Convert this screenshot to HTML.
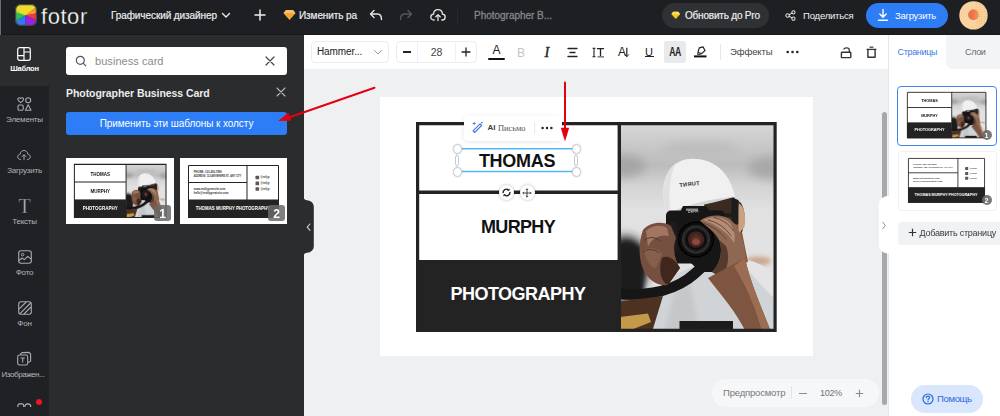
<!DOCTYPE html>
<html><head><meta charset="utf-8">
<style>
*{box-sizing:border-box;margin:0;padding:0}
html,body{width:1000px;height:416px;overflow:hidden;background:#eff0f2;font-family:"Liberation Sans","DejaVu Sans",sans-serif}
.a{position:absolute}
svg{position:absolute;overflow:visible}
#top{left:0;top:0;width:1000px;height:35px;background:#1e1f22;border-bottom:1px solid #18191b}
#side{left:0;top:35px;width:49px;height:381px;background:#202124}
#side .act{left:0;top:0;width:49px;height:51px;background:#2a2c2e}
#panel{left:49px;top:35px;width:255px;height:381px;background:#2a2c2e}
#tool{left:304px;top:35px;width:584px;height:34px;background:#fff}
#right{left:888px;top:35px;width:112px;height:381px;background:#fff;border-left:1px solid #e6e7ea}
.t{position:absolute;white-space:nowrap;line-height:1;transform:translateY(-50%)}
.hd{width:9.5px;height:9.5px;border-radius:50%;background:#fff;border:1px solid #c9cacc;box-shadow:0 0 2px rgba(0,0,0,.15)}
.hp{width:4.6px;height:11px;border-radius:2.3px;background:#fff;border:1px solid #c9cacc}
.rb{width:15px;height:15px;border-radius:50%;background:#fff;box-shadow:0 0 3px rgba(0,0,0,.3)}
.sl{position:absolute;left:0;width:49px;text-align:center;color:#b4b5b8;font-size:8px;letter-spacing:-0.2px;line-height:1;transform:translateY(-50%);white-space:nowrap}
</style></head><body>

<!-- ======= TOP BAR ======= -->
<div class="a" id="top"></div>
<div class="a" style="left:0;top:0;width:1px;height:416px;background:#6c6d70"></div>
<svg style="left:15px;top:4px" width="22" height="22" viewBox="0 0 22 22">
  <defs><clipPath id="lg"><rect x="0.5" y="0.5" width="21" height="21" rx="5"/></clipPath></defs>
  <g clip-path="url(#lg)">
    <polygon points="10.500,11.500 -6,6 -6,-6 28,-6 28,-2" fill="#efdc2a"/>
    <polygon points="10.500,11.500 28,-2 28,8" fill="#f99b3c"/>
    <polygon points="10.500,11.500 28,8 28,19" fill="#f43643"/>
    <polygon points="10.500,11.500 28,19 28,28 10.500,28" fill="#9a20e2"/>
    <polygon points="10.500,11.500 10.500,28 -6,28 -6,20" fill="#2f7af0"/>
    <polygon points="10.500,11.500 -6,20 -6,6" fill="#2ebf5c"/>
    <polygon points="10.500,11.500 -6,6 -6,1" fill="#b9d92c"/>
  </g>
  <rect x="0.600" y="0.600" width="20.800" height="20.800" rx="5" fill="none" stroke="#46474b" stroke-width="1.200"/>
</svg>
<div class="t" style="left:41px;top:17px;color:#fff;font-size:22px;letter-spacing:0.55px;-webkit-text-stroke:0.3px #1e1f22">fotor</div>
<div class="t" style="left:111px;top:15.5px;color:#ececec;font-size:10px;-webkit-text-stroke:0.2px #ececec;letter-spacing:-0.085px">Графический дизайнер</div>
<svg style="left:221px;top:12px" width="10" height="7" viewBox="0 0 10 7"><path d="M1.5 1.5 L5 5 L8.5 1.5" fill="none" stroke="#e8e8e8" stroke-width="1.4" stroke-linecap="round" stroke-linejoin="round"/></svg>
<svg style="left:254px;top:9px" width="12" height="12" viewBox="0 0 12 12"><path d="M6 1V11M1 6H11" stroke="#eee" stroke-width="1.5" stroke-linecap="round"/></svg>
<svg style="left:283px;top:9px" width="13" height="12" viewBox="0 0 13 12"><path d="M3 1H10L12.5 4.3L6.5 11L0.5 4.3Z" fill="#f2a33a"/><path d="M3 1H10L12.5 4.3H0.5Z" fill="#f8c266"/></svg>
<div class="t" style="left:299px;top:15.5px;color:#ececec;font-size:10px;-webkit-text-stroke:0.2px #ececec;letter-spacing:-0.09px">Изменить ра</div>
<svg style="left:369px;top:9px" width="14" height="12" viewBox="0 0 14 12"><path d="M5 1.5L1.5 5L5 8.5M1.8 5H8.5C11 5 12.5 7 12.5 10.5" fill="none" stroke="#e4e4e4" stroke-width="1.4" stroke-linecap="round" stroke-linejoin="round"/></svg>
<svg style="left:399px;top:9px" width="14" height="12" viewBox="0 0 14 12"><path d="M9 1.5L12.5 5L9 8.5M12.2 5H5.5C3 5 1.5 7 1.5 10.5" fill="none" stroke="#56575b" stroke-width="1.4" stroke-linecap="round" stroke-linejoin="round"/></svg>
<svg style="left:430px;top:8px" width="16" height="14" viewBox="0 0 16 14"><path d="M4.2 12H3.8C2 12 0.8 10.6 0.8 9C0.8 7.4 2 6.2 3.5 6.1C3.7 3.6 5.6 1.7 8 1.7C10.4 1.7 12.3 3.6 12.5 6.1C14 6.2 15.2 7.4 15.2 9C15.2 10.6 14 12 12.2 12H11.8" fill="none" stroke="#e4e4e4" stroke-width="1.3" stroke-linecap="round"/><path d="M8 12.5V6.8M5.8 8.8L8 6.6L10.2 8.8" fill="none" stroke="#e4e4e4" stroke-width="1.3" stroke-linecap="round" stroke-linejoin="round"/></svg>
<div class="a" style="left:457px;top:9px;width:1px;height:15px;background:#28292d"></div>
<div class="t" style="left:474px;top:15.5px;color:#85868a;font-size:10px;-webkit-text-stroke:0.3px #85868a;letter-spacing:-0.02px">Photographer B...</div>
<div class="a" style="left:662px;top:3px;width:107px;height:25px;border-radius:13px;background:#303135"></div>
<svg style="left:671px;top:11px" width="9.500" height="8.800" viewBox="0 0 13 12"><path d="M3 1H10L12.5 4.3L6.5 11L0.5 4.3Z" fill="#f5c526"/><path d="M3 1H10L12.5 4.3H0.5Z" fill="#fbe05e"/></svg>
<div class="t" style="left:685px;top:15.5px;color:#ececec;font-size:10px;-webkit-text-stroke:0.2px #ececec;letter-spacing:-0.2px">Обновить до Pro</div>
<svg style="left:784.500px;top:10px" width="11" height="11" viewBox="0 0 13 13"><circle cx="3" cy="6.5" r="2" fill="none" stroke="#e4e4e4" stroke-width="1.2"/><circle cx="10" cy="2.8" r="1.9" fill="none" stroke="#e4e4e4" stroke-width="1.2"/><circle cx="10" cy="10.2" r="1.9" fill="none" stroke="#e4e4e4" stroke-width="1.2"/><path d="M4.8 5.6L8.3 3.7M4.8 7.4L8.3 9.3" stroke="#e4e4e4" stroke-width="1.2"/></svg>
<div class="t" style="left:803px;top:15.5px;color:#f2f2f2;font-size:9.5px;letter-spacing:-0.19px">Поделиться</div>
<div class="a" style="left:866px;top:3px;width:82px;height:25px;border-radius:13px;background:#2d7df6"></div>
<svg style="left:877px;top:8px" width="12" height="14" viewBox="0 0 12 14"><path d="M6 1.5V9M2.8 6L6 9.2L9.2 6M1.5 12.2H10.5" fill="none" stroke="#fff" stroke-width="1.4" stroke-linecap="round" stroke-linejoin="round"/></svg>
<div class="t" style="left:895px;top:15.5px;color:#fff;font-size:9.5px;letter-spacing:-0.27px">Загрузить</div>
<svg style="left:959px;top:1px" width="29" height="29" viewBox="0 0 29 29"><defs><pattern id="dots" width="2.400" height="2.400" patternUnits="userSpaceOnUse"><circle cx="1.200" cy="1.200" r="0.550" fill="#f0b06e"/></pattern><clipPath id="avc"><circle cx="14.500" cy="14.400" r="14.200"/></clipPath><linearGradient id="avg" x1="0" y1="0" x2="1" y2="0"><stop offset="0" stop-color="#f0664a"/><stop offset="0.550" stop-color="#f07a4c"/><stop offset="1" stop-color="#f0a04e"/></linearGradient></defs><circle cx="14.500" cy="14.400" r="14.200" fill="#f8d3a0"/><rect x="16" y="0" width="14" height="29" fill="url(#dots)" clip-path="url(#avc)"/><circle cx="14.500" cy="13.700" r="5.400" fill="url(#avg)"/></svg>

<!-- ======= SIDEBAR ======= -->
<div class="a" id="side"><div class="a act"></div></div>
<!-- Шаблон -->
<svg style="left:17px;top:47px" width="14" height="14" viewBox="0 0 14 14"><rect x="0.7" y="0.7" width="12.6" height="12.6" rx="2" fill="none" stroke="#fff" stroke-width="1.2"/><path d="M7 0.7V13.3M0.7 8.6H7M7 5H13.3" stroke="#fff" stroke-width="1.2"/></svg>
<div class="sl" style="top:69px;color:#fff;font-weight:bold;font-size:7.5px;letter-spacing:-0.25px">Шаблон</div>
<!-- Элементы -->
<svg style="left:17px;top:97px" width="15" height="14" viewBox="0 0 15 14"><path d="M3.7 5.6C2 4.4 0.8 3.4 0.8 2.2C0.8 1.3 1.5 0.7 2.3 0.7C2.9 0.7 3.4 1 3.7 1.5C4 1 4.5 0.7 5.1 0.7C5.9 0.7 6.6 1.3 6.6 2.2C6.6 3.4 5.4 4.4 3.7 5.6Z" fill="none" stroke="#a9aaad" stroke-width="1.1" stroke-linejoin="round"/><circle cx="11.2" cy="3.2" r="2.5" fill="none" stroke="#a9aaad" stroke-width="1.1"/><rect x="1" y="8" width="5.2" height="5.2" rx="1.2" fill="none" stroke="#a9aaad" stroke-width="1.1"/><path d="M11.2 7.8L14 13.2H8.4Z" fill="none" stroke="#a9aaad" stroke-width="1.1" stroke-linejoin="round"/></svg>
<div class="sl" style="top:120px">Элементы</div>
<!-- Загрузить -->
<svg style="left:16.500px;top:148.800px" width="14" height="12.200" viewBox="0 0 16 14"><path d="M4.2 12H3.8C2 12 0.8 10.6 0.8 9C0.8 7.4 2 6.2 3.5 6.1C3.7 3.6 5.6 1.7 8 1.7C10.4 1.7 12.3 3.6 12.5 6.1C14 6.2 15.2 7.4 15.2 9C15.2 10.6 14 12 12.2 12H11.8" fill="none" stroke="#a9aaad" stroke-width="1.1" stroke-linecap="round"/><path d="M8 12.5V6.8M5.8 8.8L8 6.6L10.2 8.8" fill="none" stroke="#a9aaad" stroke-width="1.1" stroke-linecap="round" stroke-linejoin="round"/></svg>
<div class="sl" style="top:171px">Загрузить</div>
<!-- Тексты -->
<div class="a" style="left:0;top:196px;width:50px;text-align:center;font-family:'Liberation Serif',serif;font-size:20px;line-height:1;color:#b4b5b8;-webkit-text-stroke:0.35px #202124;left:-0.5px">T</div>
<div class="sl" style="top:221.5px">Тексты</div>
<!-- Фото -->
<svg style="left:18px;top:250px" width="14" height="14" viewBox="0 0 14 14"><rect x="0.7" y="0.7" width="12.6" height="12.6" rx="2.2" fill="none" stroke="#a9aaad" stroke-width="1.1"/><circle cx="4.6" cy="4.6" r="1.3" fill="none" stroke="#a9aaad" stroke-width="1"/><path d="M0.9 10.5L4 8L6.3 9.6L9.8 6.4L13.1 9.2" fill="none" stroke="#a9aaad" stroke-width="1.1" stroke-linejoin="round"/></svg>
<div class="sl" style="top:272.5px">Фото</div>
<!-- Фон -->
<svg style="left:18px;top:301px" width="14" height="14" viewBox="0 0 14 14"><rect x="0.7" y="0.7" width="12.6" height="12.6" rx="2.2" fill="none" stroke="#a9aaad" stroke-width="1.1"/><path d="M1 8.2L8.2 1M2 12.6L12.6 2M6 13L13 6" stroke="#a9aaad" stroke-width="1.1"/></svg>
<div class="sl" style="top:323.5px">Фон</div>
<!-- Изображения -->
<svg style="left:17px;top:351px" width="15" height="15" viewBox="0 0 15 15"><rect x="0.7" y="4" width="10" height="10" rx="1.8" fill="none" stroke="#a9aaad" stroke-width="1.1"/><path d="M3 3.6L5 1.6L12 1.4L13.6 3V10L11.2 11.6" fill="none" stroke="#a9aaad" stroke-width="1.1" stroke-linejoin="round"/><path d="M3.6 7H7.8M5.7 7V11.4" stroke="#a9aaad" stroke-width="1.1"/></svg>
<div class="sl" style="top:374.5px;letter-spacing:-0.43px;left:-1.5px">Изображен...</div>
<!-- last -->
<svg style="left:16.500px;top:402.500px;overflow:hidden" width="15" height="4.500" viewBox="0 0 15 4.500"><rect x="0.900" y="0.900" width="5.800" height="8" rx="1.600" fill="none" stroke="#b4b5b8" stroke-width="1.100"/><circle cx="10.800" cy="3.900" r="3" fill="none" stroke="#b4b5b8" stroke-width="1.100"/></svg>
<div class="a" style="left:36.400px;top:398.600px;width:6px;height:6px;border-radius:50%;background:#f0141e"></div>

<!-- ======= LEFT PANEL ======= -->
<div class="a" id="panel"></div>
<div class="a" style="left:66px;top:47px;width:221px;height:28px;border-radius:3px;background:#fff"></div>
<svg style="left:75px;top:55px" width="12" height="12" viewBox="0 0 12 12"><circle cx="5.3" cy="5.3" r="4" fill="none" stroke="#555" stroke-width="1.2"/><path d="M8.3 8.3L10.8 10.8" stroke="#555" stroke-width="1.2" stroke-linecap="round"/></svg>
<div class="t" style="left:95px;top:60.5px;color:#8b8b8b;font-size:11px;letter-spacing:0.05px">business card</div>
<svg style="left:265px;top:56px" width="10" height="10" viewBox="0 0 10 10"><path d="M1 1L9 9M9 1L1 9" stroke="#444" stroke-width="1.2" stroke-linecap="round"/></svg>
<div class="t" style="left:66px;top:92.5px;color:#ececec;font-size:10.5px;font-weight:bold;letter-spacing:-0.065px">Photographer Business Card</div>
<svg style="left:276px;top:87px" width="10" height="10" viewBox="0 0 10 10"><path d="M1 1L9 9M9 1L1 9" stroke="#b4b5b8" stroke-width="1.1" stroke-linecap="round"/></svg>
<div class="a" style="left:66px;top:112px;width:221px;height:23px;border-radius:3px;background:#2d7df6"></div>
<div class="t" style="left:66px;width:221px;text-align:center;top:123.5px;color:#fff;font-size:10px;letter-spacing:-0.08px">Применить эти шаблоны к холсту</div>
<!-- thumb 1 -->
<div class="a" style="left:66px;top:158px;width:108px;height:66px;background:#fff"></div>
<svg style="left:74px;top:164px" width="92.4" height="54" viewBox="416 122 360 210.4">
  <rect x="416" y="122" width="360" height="210" fill="#fff"/>
  <use href="#photo"/>
  <rect x="416" y="260" width="203" height="72" fill="#232323"/>
  <path d="M417.5 123.5H774.5V330.5H417.5ZM416 192.5H619M619 122V332" fill="none" stroke="#232323" stroke-width="4"/>
  <text x="518" y="169.5" text-anchor="middle" font-family="Liberation Sans, sans-serif" font-weight="bold" font-size="17.5" fill="#111">THOMAS</text>
  <text x="518" y="235.5" text-anchor="middle" font-family="Liberation Sans, sans-serif" font-weight="bold" font-size="17.5" fill="#111">MURPHY</text>
  <text x="518" y="301.5" text-anchor="middle" font-family="Liberation Sans, sans-serif" font-weight="bold" font-size="17.5" fill="#fff">PHOTOGRAPHY</text>
</svg>
<div class="a" style="left:154px;top:205px;width:17px;height:16px;border-radius:3px;background:rgba(105,105,105,.85)"></div>
<div class="t" style="left:154px;width:17px;text-align:center;top:213.8px;color:#fff;font-size:12px;font-weight:bold">1</div>
<!-- thumb 2 -->
<div class="a" style="left:180px;top:158px;width:107px;height:66px;background:#fff"></div>
<svg style="left:188px;top:164.5px" width="91" height="53" viewBox="0 0 91 53">
  <rect x="0" y="0" width="91" height="53" fill="#fff"/>
  <rect x="0" y="34.5" width="91" height="18.5" fill="#232323"/>
  <path d="M0.5 0.5H90.5V52.5H0.5ZM0 17.5H59M59 0V35" fill="none" stroke="#232323" stroke-width="1"/>
  <g font-family="Liberation Sans, sans-serif" font-size="2.9" fill="#333" font-weight="bold">
    <text x="5.8" y="8.4" textLength="28" lengthAdjust="spacingAndGlyphs">PHONE: 123-456-7890</text>
    <text x="5.8" y="11.9" textLength="47.5" lengthAdjust="spacingAndGlyphs">ADDRESS: 123 ANYWHERE ST., ANY CITY</text>
    <text x="5.8" y="25.3" textLength="31.6" lengthAdjust="spacingAndGlyphs">www.reallygreatsite.com</text>
    <text x="5.8" y="28.6" textLength="34.7" lengthAdjust="spacingAndGlyphs">hello@reallygreatsite.com</text>
    <text x="72.6" y="13.3" font-size="2.6" textLength="9" lengthAdjust="spacingAndGlyphs">@reallygr</text>
    <text x="72.6" y="19.3" font-size="2.6" textLength="9" lengthAdjust="spacingAndGlyphs">@reallygr</text>
    <text x="72.6" y="24.8" font-size="2.6" textLength="9" lengthAdjust="spacingAndGlyphs">@reallygr</text>
  </g>
  <rect x="67.5" y="10.7" width="3.6" height="3.6" rx="0.5" fill="#5a5a5a"/><rect x="67.5" y="16.6" width="3.6" height="3.6" rx="0.5" fill="#5a5a5a"/><rect x="67.5" y="22.2" width="3.6" height="3.6" rx="0.5" fill="#5a5a5a"/>
  <text x="7.8" y="45.4" font-family="Liberation Sans, sans-serif" font-weight="bold" font-size="5" fill="#fff" textLength="74.2" lengthAdjust="spacingAndGlyphs">THOMAS MURPHY PHOTOGRAPHY</text>
</svg>
<div class="a" style="left:268px;top:205px;width:17px;height:16px;border-radius:3px;background:rgba(105,105,105,.85)"></div>
<div class="t" style="left:268px;width:17px;text-align:center;top:213.8px;color:#fff;font-size:12px;font-weight:bold">2</div>
<!-- collapse handle -->
<svg style="left:303px;top:197px" width="12" height="59" viewBox="0 0 12 59"><path d="M0 0C1 2 2 3 4 3.200C8 3.500 10.800 6 10.800 10V49C10.800 53 8 55.500 4 55.800C2 56 1 57 0 59Z" fill="#2a2c2e"/><path d="M7 27L4.200 30.200L7 33.400" fill="none" stroke="#cfd0d2" stroke-width="1.100" stroke-linecap="round" stroke-linejoin="round"/></svg>

<!-- ======= TOOLBAR ======= -->
<div class="a" id="tool"></div>
<div class="a" style="left:311px;top:41px;width:78px;height:22px;border:1px solid #ececee;border-radius:4px"></div>
<div class="t" style="left:317px;top:52px;color:#222;font-size:10px;letter-spacing:-0.1px">Hammer...</div>
<svg style="left:373px;top:49px" width="10" height="7" viewBox="0 0 10 7"><path d="M1.5 1.5L5 5L8.5 1.5" fill="none" stroke="#999" stroke-width="1" stroke-linecap="round" stroke-linejoin="round"/></svg>
<div class="a" style="left:396px;top:41px;width:81px;height:22px;border:1px solid #ececee;border-radius:4px"></div>
<div class="a" style="left:417px;top:41px;width:1px;height:22px;background:#f0f0f2"></div>
<div class="a" style="left:455px;top:41px;width:1px;height:22px;background:#f0f0f2"></div>
<div class="a" style="left:402.5px;top:51px;width:8px;height:1.6px;background:#222"></div>
<div class="t" style="left:418px;width:37px;text-align:center;top:52px;color:#444;font-size:10.5px">28</div>
<svg style="left:461px;top:47px" width="10" height="10" viewBox="0 0 10 10"><path d="M5 1V9M1 5H9" stroke="#222" stroke-width="1.3" stroke-linecap="round"/></svg>
<!-- text color -->
<div class="t" style="left:488px;width:17px;text-align:center;top:50px;color:#222;font-size:12px">A</div>
<div class="a" style="left:488px;top:57.5px;width:17px;height:2.6px;border-radius:1px;background:#111"></div>
<div class="t" style="left:513px;width:16px;text-align:center;top:52.5px;color:#c4c4c6;font-size:12px">B</div>
<div class="t" style="left:539px;width:16px;text-align:center;top:52px;color:#222;font-size:14.5px;font-style:italic;font-family:'Liberation Serif',serif;-webkit-text-stroke:0.35px #222">I</div>
<svg style="left:567px;top:47px" width="11" height="11" viewBox="0 0 11 11"><path d="M1 1.5H10M3 5.5H8M1 9.5H10" stroke="#222" stroke-width="1.3" stroke-linecap="round"/></svg>
<svg style="left:592px;top:47px" width="13" height="11" viewBox="0 0 13 11"><path d="M0.5 1.300H3.500M0.500 9.700H3.500M2 1.300V9.700" stroke="#222" stroke-width="1.100"/><path d="M5 1.700H12M8.500 1.700V9" stroke="#222" stroke-width="1.300"/><path d="M5.500 9.900H12" stroke="#222" stroke-width="0.900"/></svg>
<div class="t" style="left:618px;top:52.300px;color:#222;font-size:12px">A</div>
<svg style="left:624px;top:47px" width="6" height="11" viewBox="0 0 6 11"><path d="M2.800 0.800V9.600" stroke="#222" stroke-width="1.200"/><path d="M0.800 7.400L2.800 9.800L4.800 7.400" fill="none" stroke="#222" stroke-width="0.900"/></svg>
<div class="t" style="left:641px;width:16px;text-align:center;top:51.800px;color:#222;font-size:11px">U</div>
<div class="a" style="left:644.500px;top:56.200px;width:9px;height:1.200px;background:#222"></div>
<div class="a" style="left:664px;top:41px;width:22px;height:22px;border-radius:2px;background:#e9eaec"></div>
<div class="t" style="left:664px;width:22px;text-align:center;top:52.300px;color:#222;font-size:12px;font-weight:bold;letter-spacing:-0.800px;transform:translateY(-50%) scaleX(.72)">AA</div>
<svg style="left:693px;top:45px" width="15" height="14" viewBox="0 0 15 14"><path d="M6.300 2.800L10 1.800L12 5.600L8.300 8.800L5 7.200Z" fill="none" stroke="#222" stroke-width="1.200" stroke-linejoin="round"/><path d="M5.200 7.400L4.400 9.300L6.800 9.500L8 8.700" fill="none" stroke="#222" stroke-width="1" stroke-linejoin="round"/><path d="M1 11.400H13.500" stroke="#111" stroke-width="2"/></svg>
<div class="a" style="left:720px;top:44px;width:1px;height:16px;background:#e6e7e9"></div>
<div class="t" style="left:730px;top:52px;color:#444;font-size:9.5px;letter-spacing:-0.1px">Эффекты</div>
<svg style="left:786px;top:50px" width="13" height="4" viewBox="0 0 13 4"><circle cx="1.7" cy="2" r="1.3" fill="#222"/><circle cx="6.5" cy="2" r="1.3" fill="#222"/><circle cx="11.3" cy="2" r="1.3" fill="#222"/></svg>
<svg style="left:840px;top:46px" width="13" height="13" viewBox="0 0 13 13"><rect x="1.400" y="6.300" width="9.400" height="5.300" rx="0.600" fill="none" stroke="#333" stroke-width="1.400"/><path d="M3.800 3.600C3.800 1.200 9.300 1.200 9.300 3.800V6.200" fill="none" stroke="#333" stroke-width="1.300"/></svg>
<svg style="left:866px;top:46px" width="11" height="13" viewBox="0 0 11 13"><path d="M0.600 3.400H10.400" stroke="#333" stroke-width="1.300"/><path d="M3.600 1.200H7.400" stroke="#333" stroke-width="1.200"/><path d="M1.900 3.600V11.300H9.100V3.600" fill="none" stroke="#333" stroke-width="1.400" stroke-linejoin="round"/></svg>

<!-- ======= CANVAS ======= -->
<svg width="0" height="0" style="left:0;top:0">
 <defs>
  <linearGradient id="bgG" x1="0" y1="0" x2="0" y2="1">
    <stop offset="0" stop-color="#d6d6d6"/><stop offset="0.1" stop-color="#c9c9c9"/><stop offset="0.2" stop-color="#bcbcbc"/><stop offset="0.3" stop-color="#d4d4d4"/><stop offset="0.42" stop-color="#e1e1e1"/><stop offset="1" stop-color="#e3e3e3"/>
  </linearGradient>
  <linearGradient id="capG" x1="0" y1="0" x2="0.3" y2="1">
    <stop offset="0" stop-color="#f3f3f3"/><stop offset="0.6" stop-color="#ebebeb"/><stop offset="1" stop-color="#cfcfcf"/>
  </linearGradient>
  <radialGradient id="lensG" cx="0.5" cy="0.5" r="0.5">
    <stop offset="0" stop-color="#6b3a30"/><stop offset="0.45" stop-color="#3a1f1c"/><stop offset="0.5" stop-color="#0c0c0c"/><stop offset="0.72" stop-color="#1c1c1c"/><stop offset="0.78" stop-color="#343434"/><stop offset="0.84" stop-color="#101010"/><stop offset="1" stop-color="#0c0c0c"/>
  </radialGradient>
  <filter id="b1" x="-20%" y="-20%" width="140%" height="140%"><feGaussianBlur stdDeviation="0.7"/></filter>
  <filter id="b4" x="-50%" y="-50%" width="200%" height="200%"><feGaussianBlur stdDeviation="5"/></filter>
  <filter id="b2" x="-50%" y="-50%" width="200%" height="200%"><feGaussianBlur stdDeviation="2.2"/></filter>
  <clipPath id="phc"><rect x="620" y="124" width="156" height="206"/></clipPath>
  <g id="photo" clip-path="url(#phc)">
    <rect x="620" y="124" width="156" height="206" fill="url(#bgG)"/>
    <ellipse cx="622" cy="166" rx="24" ry="11" fill="#a6a6a6" filter="url(#b4)"/>
    <ellipse cx="772" cy="168" rx="24" ry="11" fill="#a8a8a8" filter="url(#b4)"/>
    <ellipse cx="700" cy="150" rx="40" ry="8" fill="#bdbdbd" filter="url(#b4)"/>
    <ellipse cx="626" cy="266" rx="22" ry="30" fill="#222" filter="url(#b4)"/>
    <path d="M618 244C630 240 642 244 644 256V300H618Z" fill="#1c1c1c" filter="url(#b2)"/>
    <g filter="url(#b1)">
      <!-- neck / shoulder blur -->
      <ellipse cx="758" cy="261" rx="13" ry="4.500" fill="#c9a88e" filter="url(#b2)"/>
      <!-- shirt -->
      <path d="M650 332L660 286C676 272 700 262 722 258C742 254 760 262 776 277V332Z" fill="#d1d4d7"/>
      <path d="M742 262C752 258 766 266 776 277V300C766 290 752 276 742 262Z" fill="#e4e4e6"/>
      <path d="M664 332L674 292L690 282L700 332Z" fill="#c6c7c9" filter="url(#b2)"/>
      <path d="M679.500 332V321H733V332Z" fill="#1c1c1c"/>
      <!-- face -->
      <path d="M704 204L733 197L741 203C746.500 212 745.500 226 739 240L730 250L718 244L706 222Z" fill="#3a2a24"/><path d="M731 222L739 224C742 230 741 236 739 240L730 250L724 240Z" fill="#8d624a"/>
      <path d="M738.500 203C744 206 746.500 215 744.500 227L738.500 234Z" fill="#c9a184"/>
      <!-- neck -->
      <path d="M726 238L742 232L748 262L728 266Z" fill="#875a40"/>
      <!-- cap -->
      <path d="M663.500 194C662.500 172 675 158.800 692.500 158.800C713 158.800 729.500 171 735 196.500C723 199.500 704 203.500 692 206.500C682 209 672 213 667 215.500C664.500 208 663.800 201 663.500 194Z" fill="#f0f0f0"/>
      <path d="M667 215.500C674 208.500 704 199.500 735 196.500C723 200.500 704 204.500 692 207.500C682 210 672 213.500 667 215.500Z" fill="#d4d4d4"/>
      <path d="M663.800 194C663.300 180 668 169 676 163C670 174 668.500 190 670 211L667 215.500C664.500 208 664 201 663.800 194Z" fill="#e0e0e0"/>
      <!-- glasses -->
      <path d="M731.500 198L738.500 200L737.500 225L731.500 222Z" fill="#1b1b1b"/>
      <path d="M712 213.500L734 213.500L734 217L712 217Z" fill="#1b1b1b"/>
      <!-- camera -->
      <path d="M679 214L683 206H706L712 214Z" fill="#141414"/>
      <rect x="666" y="210.500" width="59" height="53" rx="5" fill="#141414"/>
      <path d="M690 262H722L716 272H700Z" fill="#141414"/>
      <circle cx="696" cy="239.500" r="17.300" fill="url(#lensG)"/>
      <circle cx="696" cy="239.500" r="17.300" fill="none" stroke="#050505" stroke-width="1.500"/>
      <ellipse cx="696" cy="242" rx="4" ry="3" fill="#8a4a3c"/>
      <rect x="686" y="208.500" width="12" height="2.200" fill="#8d8d8d"/>
      <text x="688" y="212.800" font-family="Liberation Sans, sans-serif" font-weight="bold" font-size="3.400" fill="#d8d8d8" transform="rotate(-4 688 212)">Canon</text>
      <circle cx="696" cy="239.500" r="12.200" fill="none" stroke="#2c2c2c" stroke-width="1.600"/>
      <path d="M668 222C672 220 676 222 677 226V250C676 254 672 256 668 254Z" fill="#1e1e1e"/>
      <!-- strap -->
      <path d="M612 293C640 297 668 293 688 279C696 273 702 268 706 262" fill="none" stroke="#161616" stroke-width="10.500"/>
      <!-- left hand -->
      <path d="M643 230C650 221.500 664 221 671 226L676 238C672 249 675 260 680 268L668 285C655 287 645 277 641 263C638.500 251 639.500 240 643 230Z" fill="#74503f"/>
      <path d="M646 231C652 225 662 224.500 667 228L669 236C660 234 652 238 648 247Z" fill="#a27660"/>
      <path d="M644 250C650 246 658 248 662 254L656 268C650 268 646 260 644 250Z" fill="#875f4e"/>
      <path d="M662 258C668 254 676 260 680 268L668 285C661 282 658 270 662 258Z" fill="#40261a"/>
      <path d="M645 240C650 236 656 237 660 241M643 252C648 248 655 249 659 253" fill="none" stroke="#4e3428" stroke-width="0.900" stroke-linecap="round"/>
      <!-- right hand -->
      <path d="M700 220.500C710 213.500 726 214 733 222C741 232 746 246 745 259C744 269 739 277 731 283L712 272C721 263 723 250 719 240C715 232 707 227 700 220.500Z" fill="#8e6753"/>
      <path d="M703 220C712 215.500 724 216.500 730 223C734 229 736 236 734 243C729 234 719 226 703 220Z" fill="#b58c75"/>
      <path d="M712 272C721 263 723 250 719 240L726 246C730 256 728 268 722 278Z" fill="#553a2e"/>
      <path d="M704 223.500C712 226 720 231 726 239M708 220C717 222 726 228 731 236M714 217.500C722 219 729 224 733.500 231" fill="none" stroke="#5e4032" stroke-width="0.900" stroke-linecap="round"/>
      <!-- right forearm -->
      <path d="M708 278L745 258C750 282 762 308 771 332L746 332C736 312 722 296 708 278Z" fill="#7d5440"/>
      <path d="M734 266L745 258C750 282 762 308 771 332L762 332C756 308 746 286 734 266Z" fill="#9c6d53"/>
      <!-- left forearm + bracelet -->
      <path d="M616 302L663 296L652 332H616Z" fill="#4e3123"/>
      <path d="M620 317L648 313.500L651 322L626 332H620Z" fill="#c39a4a"/>
    </g>
  </g>
 </defs>
</svg>
<!-- white page -->
<div class="a" style="left:380px;top:97px;width:433px;height:259px;background:#fff"></div>
<svg style="left:416px;top:122px" width="361" height="210.4" viewBox="416 122 361 210.4">
  <rect x="416" y="122" width="360.500" height="210" fill="#fff"/>
  <use href="#photo"/>
  <g transform="translate(689.5 186) rotate(-6) scale(-1 1)"><text x="0" y="0" text-anchor="middle" font-family="Liberation Sans, sans-serif" font-weight="bold" font-size="5.6" fill="#2a2a2a" letter-spacing="0.3">TURNT</text></g>
  <rect x="416" y="260" width="203.5" height="72" fill="#232323"/>
  <path d="M417.600 123.600H775.100V330.300H417.600Z" fill="none" stroke="#232323" stroke-width="3.200"/>
  <path d="M416 192.3H619M619.3 122V332" fill="none" stroke="#232323" stroke-width="3.4"/>
</svg>
<div class="t" style="left:416px;width:202px;text-align:center;top:161.2px;color:#111;font-size:18px;font-weight:bold;letter-spacing:-0.3px">THOMAS</div>
<div class="t" style="left:417px;width:202px;text-align:center;top:227.4px;color:#111;font-size:18px;font-weight:bold;letter-spacing:-0.65px">MURPHY</div>
<div class="t" style="left:417px;width:202px;text-align:center;top:294.1px;color:#fff;font-size:18px;font-weight:bold;letter-spacing:-0.5px">PHOTOGRAPHY</div>
<!-- selection -->
<svg style="left:450px;top:140px" width="140" height="40" viewBox="450 140 140 40"><path d="M457 148.700H576M457 171.400H576" stroke="#55b7f1" stroke-width="1.500"/><path d="M457 148V172M576 148V172" stroke="#bfe3f8" stroke-width="1"/></svg>
<div class="a hd" style="left:452.5px;top:144px"></div><div class="a hd" style="left:571.5px;top:144px"></div>
<div class="a hd" style="left:452.5px;top:167px"></div><div class="a hd" style="left:571.5px;top:167px"></div>
<div class="a hp" style="left:454.7px;top:154.5px"></div><div class="a hp" style="left:573.7px;top:154.5px"></div>
<!-- rotate / move -->
<div class="a rb" style="left:498.5px;top:185px"></div><div class="a rb" style="left:519.5px;top:185px"></div>
<svg style="left:501.5px;top:188px" width="9" height="9" viewBox="0 0 9 9"><path d="M1.2 5.2A3.3 3.3 0 0 1 6.8 2.2M7.8 3.8A3.3 3.3 0 0 1 2.2 6.8" fill="none" stroke="#222" stroke-width="1.4"/><path d="M7.4 0.8L7 2.6L5.3 2.2M1.6 8.2L2 6.4L3.7 6.8" fill="none" stroke="#333" stroke-width="0.9"/></svg>
<svg style="left:522px;top:187.5px" width="10" height="10" viewBox="0 0 10 10"><path d="M5 0.8V9.2M0.8 5H9.2" stroke="#333" stroke-width="0.9"/><path d="M3.8 2L5 0.8L6.2 2M3.8 8L5 9.2L6.2 8M2 3.8L0.8 5L2 6.2M8 3.8L9.2 5L8 6.2" fill="none" stroke="#333" stroke-width="0.8"/></svg>
<!-- popup -->
<div class="a" style="left:464px;top:115.5px;width:98px;height:25px;border-radius:4px;background:#fff;box-shadow:0 1px 5px rgba(0,0,0,.10)"></div>
<svg style="left:471px;top:121px" width="13" height="13" viewBox="0 0 13 13"><path d="M2 11.2L9 4.2L10.6 5.8L3.6 12.8Z" transform="translate(0 -1.3)" fill="none" stroke="#4677e0" stroke-width="1.1" stroke-linejoin="round"/><path d="M3.2 1V4M1.7 2.5H4.7" stroke="#4677e0" stroke-width="0.9"/><path d="M10.8 0.8V2.6M9.9 1.7H11.7" stroke="#4677e0" stroke-width="0.8"/></svg>
<div class="t" style="left:487.5px;top:128px;color:#3c3c3c;font-size:8px;font-weight:bold">AI</div>
<div class="t" style="left:498px;top:128px;color:#555;font-size:8.5px;font-family:'Liberation Serif',serif;letter-spacing:-0.1px">Письмо</div>
<div class="a" style="left:533.5px;top:122px;width:1px;height:12px;background:#e8e8ea"></div>
<svg style="left:541px;top:126.3px" width="12" height="4" viewBox="0 0 12 4"><circle cx="1.6" cy="2" r="1.2" fill="#222"/><circle cx="6" cy="2" r="1.2" fill="#222"/><circle cx="10.4" cy="2" r="1.2" fill="#222"/></svg>
<!-- scrollbar -->
<div class="a" style="left:882px;top:112px;width:5px;height:292.5px;border-radius:2.5px;background:#a7a8aa"></div>
<!-- zoom pill -->
<div class="a" style="left:712px;top:379px;width:167px;height:27.5px;border-radius:14px;background:#f6f7f8"></div>
<div class="t" style="left:723px;top:392.5px;color:#77787b;font-size:9.5px;letter-spacing:-0.18px">Предпросмотр</div>
<div class="a" style="left:791px;top:386px;width:1px;height:13px;background:#e3e4e6"></div>
<div class="a" style="left:799px;top:392.6px;width:8px;height:1.2px;background:#8a8b8e"></div>
<div class="t" style="left:820px;top:392.5px;color:#707174;font-size:9px;letter-spacing:-0.25px">102%</div>
<svg style="left:855px;top:388.5px" width="9" height="9" viewBox="0 0 9 9"><path d="M4.5 0.8V8.2M0.8 4.5H8.2" stroke="#8a8b8e" stroke-width="1.1"/></svg>

<!-- ======= RIGHT PANEL ======= -->
<div class="a" id="right"></div>
<div class="a" style="left:946px;top:35px;width:54px;height:34px;background:#f3f4f6;border-bottom-left-radius:7px"></div>
<div class="t" style="left:897.5px;top:52px;color:#3a7be6;font-size:9px;letter-spacing:-0.32px">Страницы</div>
<div class="t" style="left:965px;top:52px;color:#6a6b6e;font-size:9px;letter-spacing:-0.35px">Слои</div>
<!-- page thumb 1 -->
<div class="a" style="left:897px;top:85.5px;width:99.5px;height:60px;border:1.6px solid #4384ec;border-radius:4px;background:#fff"></div>
<svg style="left:907px;top:92px" width="79.3" height="46.3" viewBox="416 122 360 210.4">
  <rect x="416" y="122" width="360" height="210" fill="#fff"/>
  <use href="#photo"/>
  <rect x="416" y="260" width="203" height="72" fill="#232323"/>
  <path d="M417.5 123.5H774.5V330.5H417.5ZM416 192.5H619M619 122V332" fill="none" stroke="#232323" stroke-width="4"/>
  <text x="518" y="169.5" text-anchor="middle" font-family="Liberation Sans, sans-serif" font-weight="bold" font-size="17.5" fill="#111">THOMAS</text>
  <text x="518" y="235.5" text-anchor="middle" font-family="Liberation Sans, sans-serif" font-weight="bold" font-size="17.5" fill="#111">MURPHY</text>
  <text x="518" y="301.5" text-anchor="middle" font-family="Liberation Sans, sans-serif" font-weight="bold" font-size="17.5" fill="#fff">PHOTOGRAPHY</text>
</svg>
<div class="a" style="left:981.5px;top:129.5px;width:10px;height:10px;border-radius:50%;background:rgba(105,105,105,.9)"></div>
<div class="t" style="left:981.5px;width:10px;text-align:center;top:134.7px;color:#fff;font-size:7px;font-weight:bold">1</div>
<!-- page thumb 2 -->
<div class="a" style="left:897.5px;top:150.5px;width:99px;height:60px;border:1px solid #f0f1f3;border-radius:3px;background:#fff"></div>
<svg style="left:908px;top:157.5px" width="77" height="45.5" viewBox="0 0 91 53.8">
  <rect x="0" y="0" width="91" height="53" fill="#fff"/>
  <rect x="0" y="34.5" width="91" height="18.5" fill="#232323"/>
  <path d="M0.5 0.5H90.5V52.5H0.5ZM0 17.5H59M59 0V35" fill="none" stroke="#232323" stroke-width="1"/>
  <g font-family="Liberation Sans, sans-serif" font-size="2.9" fill="#333" font-weight="bold">
    <text x="5.8" y="8.4" textLength="28" lengthAdjust="spacingAndGlyphs">PHONE: 123-456-7890</text>
    <text x="5.8" y="11.9" textLength="47.5" lengthAdjust="spacingAndGlyphs">ADDRESS: 123 ANYWHERE ST., ANY CITY</text>
    <text x="5.8" y="25.3" textLength="31.6" lengthAdjust="spacingAndGlyphs">www.reallygreatsite.com</text>
    <text x="5.8" y="28.6" textLength="34.7" lengthAdjust="spacingAndGlyphs">hello@reallygreatsite.com</text>
    <text x="72.6" y="13.3" font-size="2.6" textLength="9" lengthAdjust="spacingAndGlyphs">@reallygr</text>
    <text x="72.6" y="19.3" font-size="2.6" textLength="9" lengthAdjust="spacingAndGlyphs">@reallygr</text>
    <text x="72.6" y="24.8" font-size="2.6" textLength="9" lengthAdjust="spacingAndGlyphs">@reallygr</text>
  </g>
  <rect x="67.5" y="10.7" width="3.6" height="3.6" rx="0.5" fill="#5a5a5a"/><rect x="67.5" y="16.6" width="3.6" height="3.6" rx="0.5" fill="#5a5a5a"/><rect x="67.5" y="22.2" width="3.6" height="3.6" rx="0.5" fill="#5a5a5a"/>
  <text x="7.8" y="45.4" font-family="Liberation Sans, sans-serif" font-weight="bold" font-size="5" fill="#fff" textLength="74.2" lengthAdjust="spacingAndGlyphs">THOMAS MURPHY PHOTOGRAPHY</text>
</svg>
<div class="a" style="left:981.5px;top:195px;width:10px;height:10px;border-radius:50%;background:rgba(105,105,105,.9)"></div>
<div class="t" style="left:981.5px;width:10px;text-align:center;top:200.2px;color:#fff;font-size:7px;font-weight:bold">2</div>
<!-- add page -->
<div class="a" style="left:897.5px;top:221.5px;width:110px;height:23px;border-radius:4px;background:#f1f2f4"></div>
<svg style="left:907.5px;top:228px" width="9" height="9" viewBox="0 0 9 9"><path d="M4.5 0.8V8.2M0.8 4.5H8.2" stroke="#333" stroke-width="1.2"/></svg>
<div class="t" style="left:919.5px;top:232.7px;color:#3a3a3c;font-size:9px;letter-spacing:-0.235px">Добавить страницу</div>
<!-- right collapse handle -->
<svg style="left:878px;top:196px" width="12" height="58" viewBox="0 0 12 58"><path d="M12 0H10C4 0.500 0.800 4 0.800 10V47.500C0.800 53.500 4 57 10 57.500H12Z" fill="#fff"/><path d="M4.800 26.200L7.300 29.500L4.800 32.800" fill="none" stroke="#8f9093" stroke-width="1" stroke-linecap="round" stroke-linejoin="round"/></svg>
<!-- help -->
<div class="a" style="left:911px;top:385px;width:71.5px;height:28px;border-radius:14px;background:#d9e6fc"></div>
<svg style="left:921.5px;top:393px" width="12" height="12" viewBox="0 0 12 12"><circle cx="6" cy="6" r="5" fill="none" stroke="#2a6be0" stroke-width="1.2"/><path d="M4.3 4.7C4.3 3.7 5 3.1 6 3.1C7 3.1 7.7 3.7 7.7 4.6C7.7 5.8 6 5.8 6 7.1" fill="none" stroke="#2a6be0" stroke-width="1.1" stroke-linecap="round"/><circle cx="6" cy="8.8" r="0.7" fill="#2a6be0"/></svg>
<div class="t" style="left:937px;top:399px;color:#2a6be0;font-size:9.5px;letter-spacing:-0.33px">Помощь</div>

<!-- ======= OVERLAYS ======= -->
<svg style="left:0;top:0" width="1000" height="416" viewBox="0 0 1000 416">
  <path d="M374.5 87.7L286 118.5" stroke="#e5000f" stroke-width="2" stroke-linecap="round"/>
  <path d="M278 121L288.4 112.8L291.2 120.8Z" fill="#e5000f"/>
  <path d="M565 82.5V130" stroke="#e5000f" stroke-width="2" stroke-linecap="round"/>
  <path d="M565 141.5L560.8 127.8H569.2Z" fill="#e5000f"/>
</svg>
</body></html>
